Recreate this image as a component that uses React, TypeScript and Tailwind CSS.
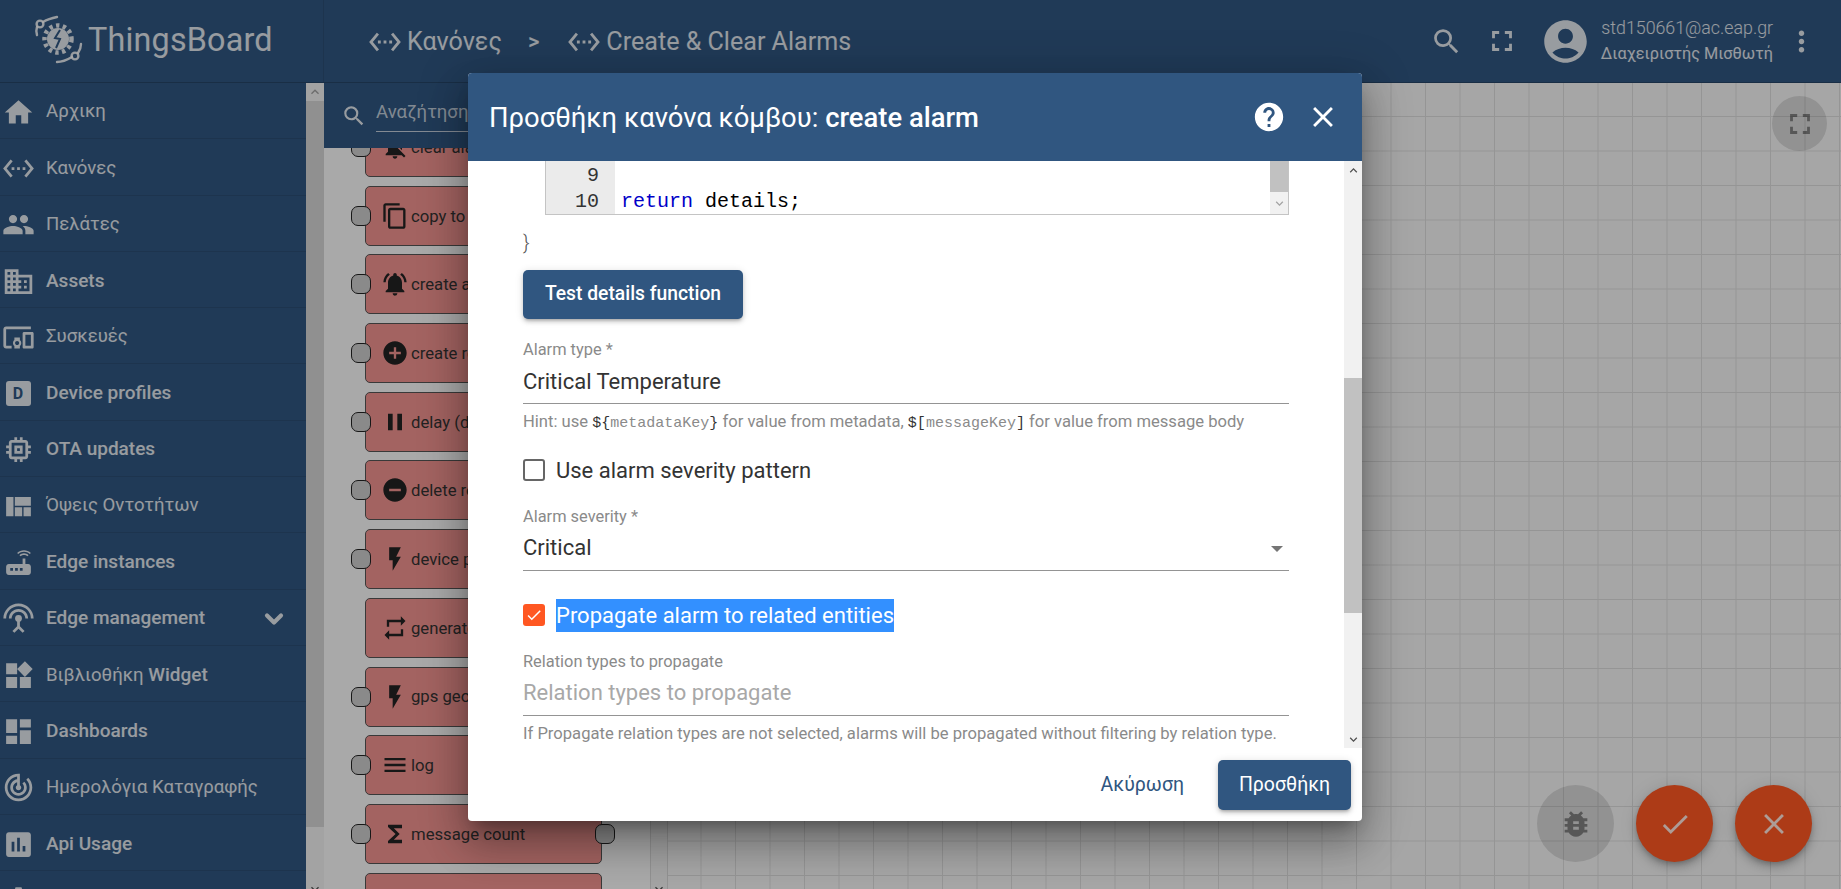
import React from 'react'
import type { IconType } from 'react-icons'
import { ChevronDown } from 'lucide-react'
import {
  MdAccountCircle,
  MdAddCircle,
  MdBugReport,
  MdCheck,
  MdClose,
  MdContentCopy,
  MdDashboard,
  MdDevicesOther,
  MdDomain,
  MdFlashOn,
  MdFullscreen,
  MdFunctions,
  MdHelp,
  MdHome,
  MdInsertChart,
  MdKeyboardArrowDown,
  MdKeyboardArrowUp,
  MdMemory,
  MdMenu,
  MdMoreVert,
  MdNotificationsActive,
  MdNotificationsOff,
  MdPause,
  MdPeople,
  MdRemoveCircle,
  MdRepeat,
  MdRouter,
  MdSearch,
  MdSettings,
  MdSettingsEthernet,
  MdSettingsInputAntenna,
  MdTrackChanges,
  MdViewQuilt,
  MdWidgets,
} from 'react-icons/md'

interface NavItem {
  label: string
  strong?: string
  icon?: IconType
  arrow?: boolean
}

const navItems: NavItem[] = [
  { label: 'Αρχικη', icon: MdHome },
  { label: 'Κανόνες', icon: MdSettingsEthernet },
  { label: 'Πελάτες', icon: MdPeople },
  { label: '', strong: 'Assets', icon: MdDomain },
  { label: 'Συσκευές', icon: MdDevicesOther },
  { label: '', strong: 'Device profiles' },
  { label: '', strong: 'OTA updates', icon: MdMemory },
  { label: 'Όψεις Οντοτήτων', icon: MdViewQuilt },
  { label: '', strong: 'Edge instances', icon: MdRouter },
  { label: '', strong: 'Edge management', icon: MdSettingsInputAntenna, arrow: true },
  { label: 'Βιβλιοθήκη ', strong: 'Widget', icon: MdWidgets },
  { label: '', strong: 'Dashboards', icon: MdDashboard },
  { label: 'Ημερολόγια Καταγραφής', icon: MdTrackChanges },
  { label: '', strong: 'Api Usage', icon: MdInsertChart },
  { label: 'Ρυθμίσεις', icon: MdSettings },
]

const ruleNodes: { name: string; icon: IconType; out?: boolean; noIn?: boolean }[] = [
  { name: 'clear alarm', icon: MdNotificationsOff },
  { name: 'copy to view', icon: MdContentCopy },
  { name: 'create alarm', icon: MdNotificationsActive },
  { name: 'create relation', icon: MdAddCircle },
  { name: 'delay (deprecated)', icon: MdPause },
  { name: 'delete relation', icon: MdRemoveCircle },
  { name: 'device profile', icon: MdFlashOn },
  { name: 'generator', icon: MdRepeat, noIn: true },
  { name: 'gps geofencing', icon: MdFlashOn },
  { name: 'log', icon: MdMenu },
  { name: 'message count', icon: MdFunctions, out: true },
  { name: 'message type', icon: MdRepeat },
]

function Logo() {
  return (
    <svg viewBox="0 0 50 50" className="w-[50px] h-[50px] shrink-0" fill="none" stroke="currentColor">
      <circle cx="25" cy="24" r="11" fill="currentColor" stroke="none" />
      <circle cx="25" cy="24" r="13.5" strokeWidth="4.5" strokeDasharray="3.4 3.4" />
      <path d="M27 15l-5 8 5 1-4 9" stroke="#305680" strokeWidth="2" />
      <circle cx="7" cy="9" r="3.4" strokeWidth="2.4" />
      <path d="M10 7c5-3 9-4 14-5M4 12c-1 3-1 5 0 8" strokeWidth="2.4" strokeLinecap="round" />
      <circle cx="42" cy="41" r="3.4" strokeWidth="2.4" />
      <path d="M39 42c-5 3-9 5-15 5M45 38c2-3 3-6 3-9" strokeWidth="2.4" strokeLinecap="round" />
    </svg>
  )
}

function Header() {
  return (
    <header className="h-[83px] shrink-0 flex items-center bg-[#305680] text-white/85 border-b border-black/20">
      <div className="w-[324px] h-full shrink-0 flex items-center pl-[33px] pb-[2px] gap-[5px] border-r border-black/10">
        <Logo />
        <span className="text-[32.3px] tracking-[0.2px] leading-none">ThingsBoard</span>
      </div>
      <div className="flex items-center pl-[44px] pt-[2px] text-[25.1px] text-white/85">
        <MdSettingsEthernet className="w-[34px] h-[34px]" />
        <span className="ml-[5px]">Κανόνες</span>
        <span className="ml-[26px] text-[22px] font-medium">&gt;</span>
        <MdSettingsEthernet className="ml-[28px] w-[34px] h-[34px]" />
        <span className="ml-[5px]">Create &amp; Clear Alarms</span>
      </div>
      <div className="ml-auto flex items-center">
        <MdSearch className="w-[33px] h-[33px]" />
        <MdFullscreen className="ml-[22px] w-[34px] h-[34px]" />
        <MdAccountCircle className="ml-[21px] w-[51px] h-[51px]" />
        <div className="ml-[7px] w-[175px] flex flex-col items-end">
          <span className="text-[17.8px] leading-[26px] font-light">std150661@ac.eap.gr</span>
          <span className="text-[16.3px] leading-[26px]">Διαχειριστής Μισθωτή</span>
        </div>
        <MdMoreVert className="ml-[12px] mr-[23px] w-[33px] h-[33px]" />
      </div>
    </header>
  )
}

function Sidebar() {
  return (
    <aside className="w-[324px] shrink-0 flex bg-[#305680] overflow-hidden">
      <nav className="w-[306px] shrink-0">
        {navItems.map((item) => {
          const Icon = item.icon
          return (
            <div
              key={item.label + item.strong}
              className="h-[56.3px] flex items-center border-b border-black/10 text-white/85 text-[18.6px] pt-[3px]"
            >
              <div className="w-[46px] flex justify-center pr-[10px]">
                {Icon ? (
                  <Icon className="w-[33px] h-[33px] shrink-0" />
                ) : (
                  <span className="w-[25px] h-[25px] rounded-[3px] bg-white/85 flex items-center justify-center text-[16px] font-bold text-[#305680]">
                    D
                  </span>
                )}
              </div>
              <span className="whitespace-pre">
                {item.label}
                {item.strong && <span className="font-medium text-[19px]">{item.strong}</span>}
              </span>
              {item.arrow && <ChevronDown strokeWidth={3.6} className="ml-auto mr-[18px] w-[28px] h-[28px]" />}
            </div>
          )
        })}
      </nav>
      <div className="w-[18px] shrink-0 flex flex-col bg-[#f1f1f1]">
        <div className="h-[18px] shrink-0 flex items-center justify-center text-[#a0a0a0]">
          <MdKeyboardArrowUp className="w-[16px] h-[16px]" />
        </div>
        <div className="h-[726px] shrink-0 bg-[#d4d4d4]" />
        <div className="mt-[54px] flex justify-center text-[#505050]">
          <MdKeyboardArrowDown className="w-[16px] h-[16px]" />
        </div>
      </div>
    </aside>
  )
}

function NodeLibrary() {
  return (
    <section className="w-[344px] shrink-0 flex bg-[#fafafa] overflow-hidden">
      <div className="w-[326px] shrink-0 flex flex-col">
        <div className="relative z-10 h-[65px] shrink-0 flex items-center bg-[#305680] pl-[17px] text-white/85">
          <MdSearch className="w-[26px] h-[26px] shrink-0" />
          <div className="ml-[9px] flex-1 mr-[12px] h-[36px] text-[18.6px] leading-[32px] text-white/70 border-b border-white/70 mb-[4px]">
            Αναζήτηση κόμβων
          </div>
        </div>
        <div className="-mt-[31px] flex flex-col gap-[8.7px] pl-[41px]">
          {ruleNodes.map((node) => {
            const Icon = node.icon
            return (
              <div
                key={node.name}
                className="relative h-[60px] w-[237px] shrink-0 flex items-center rounded-[5px] border border-[#555] bg-[#f1928f] text-[#333] text-[16.7px]"
              >
                {!node.noIn && (
                  <span className="absolute left-[-15px] top-[19px] w-[20px] h-[20px] rounded-[7px] border border-[#222] bg-[#ccc]" />
                )}
                {node.out && (
                  <span className="absolute right-[-14px] top-[19px] w-[20px] h-[20px] rounded-[7px] border border-[#222] bg-[#ccc]" />
                )}
                <div className="w-[45px] flex justify-center pl-[12px] shrink-0">
                  <Icon className="w-[28px] h-[28px] text-[#222] shrink-0" />
                </div>
                <span className="whitespace-nowrap pt-[1px]">{node.name}</span>
              </div>
            )
          })}
        </div>
      </div>
      <div className="w-[18px] shrink-0 flex flex-col justify-end items-center bg-[#f1f1f1] border-x border-[#d8d8d8] text-[#505050]">
        <MdKeyboardArrowDown className="w-[16px] h-[16px] -mb-[8px]" />
      </div>
    </section>
  )
}

function Fab({ icon: Icon, className, size }: { icon: IconType; className: string; size: string }) {
  return (
    <div className={`rounded-full flex items-center justify-center ${size} ${className}`}>
      <Icon className="w-[34px] h-[34px]" />
    </div>
  )
}

function Canvas() {
  return (
    <main className="relative flex-1 bg-[#f5f5f5] bg-[linear-gradient(#dcdcdc_1px,transparent_1px),linear-gradient(90deg,#dcdcdc_1px,transparent_1px)] bg-[size:34.5px_34.5px] bg-[position:-2px_-1.5px]">
      <div className="absolute top-[13px] right-[14px]">
        <Fab icon={MdFullscreen} size="w-[55px] h-[55px]" className="bg-black/12 text-black/40" />
      </div>
      <div className="absolute right-[29px] bottom-[27px] flex gap-[22px]">
        <Fab icon={MdBugReport} size="w-[77px] h-[77px]" className="bg-black/12 text-black/40" />
        <Fab
          icon={MdCheck}
          size="w-[77px] h-[77px]"
          className="bg-[#ff5722] text-white/85 shadow-[0_3px_5px_-1px_rgba(0,0,0,0.2),0_6px_10px_0_rgba(0,0,0,0.14),0_1px_18px_0_rgba(0,0,0,0.12)]"
        />
        <Fab
          icon={MdClose}
          size="w-[77px] h-[77px]"
          className="bg-[#ff5722] text-white/85 shadow-[0_3px_5px_-1px_rgba(0,0,0,0.2),0_6px_10px_0_rgba(0,0,0,0.14),0_1px_18px_0_rgba(0,0,0,0.12)]"
        />
      </div>
    </main>
  )
}

function CodeEditor() {
  return (
    <div className="ml-[22px] h-[54px] flex border-x border-b border-[#c4c4c4] font-['Liberation_Mono',monospace] text-[20px]">
      <div className="w-[69px] shrink-0 bg-[#ebebeb] text-[#333] text-right pr-[16px] pt-[2px] leading-[26px]">
        <div>9</div>
        <div>10</div>
      </div>
      <div className="flex-1 pl-[6px] pt-[28px] leading-[26px] text-black">
        <span className="text-[#0000c8]">return</span> details;
      </div>
      <div className="w-[18px] shrink-0 flex flex-col bg-[#f1f1f1]">
        <div className="h-[31px] bg-[#c1c1c1]" />
        <div className="flex-1 flex items-center justify-center text-[#a3a3a3]">
          <MdKeyboardArrowDown className="w-[15px] h-[15px]" />
        </div>
      </div>
    </div>
  )
}

function Label({ text, className }: { text: string; className: string }) {
  return <div className={`h-[18px] leading-[18px] text-[16.4px] text-[#8a8a8a] ${className}`}>{text}</div>
}

function Dialog() {
  return (
    <div className="w-[894px] h-[748px] flex flex-col bg-white rounded-[4px] overflow-hidden shadow-[0_11px_15px_-7px_rgba(0,0,0,0.3),0_24px_38px_3px_rgba(0,0,0,0.2),0_9px_46px_8px_rgba(0,0,0,0.18)]">
      <div className="h-[88px] shrink-0 flex items-center bg-[#305680] pl-[21px] text-white">
        <h2 className="text-[27.4px] pt-[3px]">
          Προσθήκη κανόνα κόμβου: <span className="font-medium">create alarm</span>
        </h2>
        <MdHelp className="ml-auto w-[34px] h-[34px]" />
        <MdClose className="ml-[20px] mr-[22px] w-[34px] h-[34px]" />
      </div>
      <div className="h-[587px] shrink-0 flex">
        <div className="flex-1 min-w-0 px-[55px] text-[#333]">
          <CodeEditor />
          <div className="mt-[15px] h-[24px] leading-[24px] text-[20px] font-light text-[#555]">{'}'}</div>
          <button className="mt-[16px] w-[220px] h-[49px] pb-[1px] rounded-[5px] bg-[#305680] text-white text-[19.3px] font-medium shadow-[0_3px_3px_-2px_rgba(0,0,0,0.2),0_3px_4px_0_rgba(0,0,0,0.14),0_1px_8px_0_rgba(0,0,0,0.12)]">
            Test details function
          </button>

          <Label text="Alarm type *" className="mt-[22px]" />
          <div className="mt-[8px] h-[37px] leading-[29px] text-[22px] border-b border-[#949494]">Critical Temperature</div>
          <div className="mt-[9px] h-[18px] leading-[18px] text-[16.6px] text-[#8a8a8a] whitespace-nowrap">
            Hint: use{' '}
            <code className="font-['Liberation_Mono',monospace] text-[15px]">
              <span className="text-[#333]">$&#123;</span>metadataKey<span className="text-[#333]">&#125;</span>
            </code>{' '}
            for value from metadata,{' '}
            <code className="font-['Liberation_Mono',monospace] text-[15px]">
              <span className="text-[#333]">$[</span>messageKey<span className="text-[#333]">]</span>
            </code>{' '}
            for value from message body
          </div>

          <div className="mt-[28px] h-[22px] flex items-center gap-[11px]">
            <span className="w-[22px] h-[22px] rounded-[3px] border-2 border-[#666]" />
            <span className="text-[22px]">Use alarm severity pattern</span>
          </div>

          <Label text="Alarm severity *" className="mt-[27px]" />
          <div className="mt-[7px] h-[38px] flex justify-between leading-[30px] text-[22px] border-b border-[#949494]">
            Critical
            <span className="mt-[13px] mr-[6px] w-0 h-0 border-x-[6px] border-x-transparent border-t-[6px] border-t-[#757575]" />
          </div>

          <div className="mt-[33px] h-[22px] flex items-center gap-[11px]">
            <span className="w-[22px] h-[22px] rounded-[3px] bg-[#ff5722] flex items-center justify-center text-white">
              <MdCheck className="w-[18px] h-[18px]" />
            </span>
            <span className="h-[33px] leading-[33px] bg-[#3390ff] text-white text-[22px]">Propagate alarm to related entities</span>
          </div>

          <Label text="Relation types to propagate" className="mt-[27px]" />
          <div className="mt-[7px] h-[38px] leading-[30px] text-[22px] text-[#a8a8a8] border-b border-[#949494]">Relation types to propagate</div>
          <div className="mt-[9px] h-[18px] leading-[18px] text-[16.6px] text-[#8a8a8a] whitespace-nowrap">
            If Propagate relation types are not selected, alarms will be propagated without filtering by relation type.
          </div>
        </div>
        <div className="w-[18px] shrink-0 flex flex-col bg-[#f1f1f1] text-[#505050]">
          <div className="h-[18px] flex items-center justify-center">
            <MdKeyboardArrowUp className="w-[15px] h-[15px]" />
          </div>
          <div className="mt-[199px] h-[235px] bg-[#c1c1c1]" />
          <div className="mt-auto h-[18px] flex items-center justify-center">
            <MdKeyboardArrowDown className="w-[15px] h-[15px]" />
          </div>
        </div>
      </div>
      <div className="flex-1 flex justify-end items-start pt-[12px] pr-[11px]">
        <button className="h-[50px] px-[20px] text-[19.5px] text-[#305680]">Ακύρωση</button>
        <button className="ml-[14px] w-[133px] h-[50px] rounded-[5px] bg-[#305680] text-white text-[19.5px] shadow-[0_3px_3px_-2px_rgba(0,0,0,0.2),0_3px_4px_0_rgba(0,0,0,0.14),0_1px_8px_0_rgba(0,0,0,0.12)]">
          Προσθήκη
        </button>
      </div>
    </div>
  )
}

export default function App() {
  return (
    <div className="relative h-[889px] overflow-hidden flex flex-col font-['Roboto',sans-serif]">
      <Header />
      <div className="flex-1 min-h-0 flex">
        <Sidebar />
        <NodeLibrary />
        <Canvas />
      </div>
      <div className="absolute inset-0 z-20 bg-[rgba(0,0,0,0.32)] pl-[468px] pt-[73px]">
        <Dialog />
      </div>
    </div>
  )
}
